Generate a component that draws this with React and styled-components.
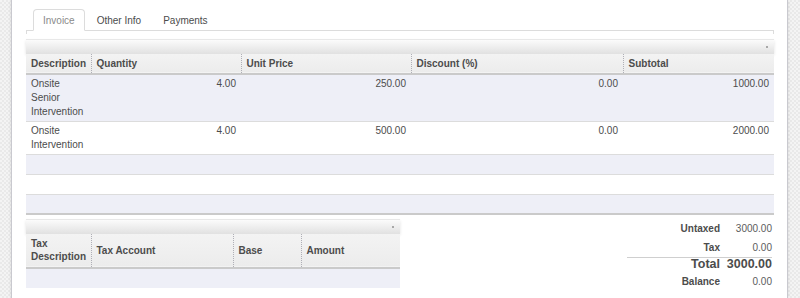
import React from 'react';
import styled, { createGlobalStyle } from 'styled-components';

const lines = [
  { id: 1, name: 'Onsite Senior Intervention', qty: '4.00', price: '250.00', discount: '0.00', subtotal: '1000.00' },
  { id: 2, name: 'Onsite Intervention', qty: '4.00', price: '500.00', discount: '0.00', subtotal: '2000.00' },
];

const tabs = ['Invoice', 'Other Info', 'Payments'];

const GlobalStyle = createGlobalStyle`
  html, body {
    margin: 0;
    padding: 0;
    height: 100%;
  }
  body {
    font-family: "Liberation Sans", Arial, sans-serif;
    font-size: 10px;
    color: #4c4c4c;
    background-color: #f4f4f4;
    background-image:
      linear-gradient(45deg, #e9e9e9 25%, transparent 25%, transparent 75%, #e9e9e9 75%),
      linear-gradient(45deg, #e9e9e9 25%, transparent 25%, transparent 75%, #e9e9e9 75%);
    background-size: 4px 4px;
    background-position: 0 0, 2px 2px;
  }
`;

const Sheet = styled.div`
  margin: 0 12px 0 11px;
  min-height: 298px;
  box-sizing: border-box;
  background: white;
  border-left: 1px solid #c9c9cf;
  border-right: 1px solid #c9c9cf;
  box-shadow: 0 0 3px rgba(0, 0, 0, 0.12);
  padding: 9px 13px 0 14px;
`;

const TabBar = styled.ul`
  display: flex;
  margin: 0;
  padding: 0 0 0 7px;
  list-style: none;
  border-bottom: 1px solid #dcdcdc;
  position: relative;
  &::before,
  &::after {
    content: '';
    position: absolute;
    bottom: -4px;
    width: 3px;
    height: 4px;
    border-left: 1px solid #dcdcdc;
  }
  &::before { left: 0; }
  &::after { right: 0; border-left: none; border-right: 1px solid #dcdcdc; }
`;

const Tab = styled.li`
  margin: 0 2px -1px 0;
  padding: 0 9px;
  height: 22px;
  line-height: 22px;
  box-sizing: border-box;
  font-size: 10px;
  color: ${(p) => (p.$active ? '#8a8a8a' : '#4c4c4c')};
  background: ${(p) => (p.$active ? 'white' : 'transparent')};
  border: 1px solid ${(p) => (p.$active ? '#dcdcdc' : 'transparent')};
  border-bottom-color: ${(p) => (p.$active ? 'white' : 'transparent')};
  border-radius: 4px 4px 0 0;
`;

const Panel = styled.div`
  padding-top: 8px;
`;

const List = styled.table`
  width: ${(p) => p.$width || '100%'};
  border-collapse: collapse;
  table-layout: fixed;
  border-bottom: ${(p) => (p.$footer ? '2px solid #cacaca' : 'none')};
`;

const Toolbar = styled.tr`
  height: 14px;
  background: linear-gradient(to bottom, #fbfbfb, #e1e1e1);
  box-shadow: 0 1px 3px rgba(0, 0, 0, 0.12);
  td {
    padding: 0 6px 0 0;
    border-top: 1px solid #e8e8e8;
    text-align: right;
    line-height: 12px;
  }
`;

const PagerDot = styled.span`
  display: inline-block;
  width: 2px;
  height: 2px;
  background: #a8a8a8;
  vertical-align: middle;
`;

const HeadRow = styled.tr`
  background: linear-gradient(to bottom, #f3f3f3, #ececec);
  border-bottom: 2px solid #cacaca;
`;

const Th = styled.th`
  padding: 3px 5px;
  height: ${(p) => p.$h || 'auto'};
  box-sizing: border-box;
  text-align: left;
  font-weight: bold;
  font-size: 10px;
  line-height: 13px;
  color: #4c4c4c;
  border-right: ${(p) => (p.$last ? 'none' : '1px dotted #afafb6')};
  vertical-align: middle;
`;

const Row = styled.tr`
  height: ${(p) => p.$h || 'auto'};
  background: ${(p) => (p.$odd ? '#eeeff7' : 'white')};
  border-top: 1px solid #dcdcdc;
`;

const Td = styled.td`
  padding: 2px 5px 2px;
  vertical-align: top;
  line-height: 14px;
  text-align: ${(p) => (p.$num ? 'right' : 'left')};
  color: #4c4c4c;
`;

const Bottom = styled.div`
  display: flex;
  justify-content: space-between;
  align-items: flex-start;
  margin-top: 4px;
`;

const Totals = styled.table`
  border-collapse: collapse;
  margin-top: 1px;
  margin-right: 2px;
`;

const TotalRow = styled.tr`
  border-top: ${(p) => (p.$line ? '1px solid #cfcfcf' : 'none')};
  th, td {
    height: ${(p) => p.$h || 17}px;
    padding-top: ${(p) => p.$pt || 0}px;
  }
`;

const TotalLabel = styled.th`
  width: 99px;
  text-align: right;
  font-weight: bold;
  font-size: ${(p) => (p.$big ? '12.5px' : '10px')};
  line-height: ${(p) => (p.$big ? '13px' : '17px')};
  color: #4c4c4c;
  padding: 0 6px 0 0;
  vertical-align: top;
  box-sizing: border-box;
`;

const TotalValue = styled.td`
  text-align: right;
  font-weight: ${(p) => (p.$big ? 'bold' : 'normal')};
  font-size: ${(p) => (p.$big ? '12.5px' : '10px')};
  line-height: ${(p) => (p.$big ? '13px' : '17px')};
  color: ${(p) => (p.$big ? '#4c4c4c' : '#5c5c5c')};
  padding: 0;
  vertical-align: top;
  min-width: 46px;
  box-sizing: border-box;
`;

const App = () => {
  return (
    <>
      <GlobalStyle />
      <Sheet>
        <TabBar>
          {tabs.map((t, i) => (
            <Tab key={t} $active={i === 0}>{t}</Tab>
          ))}
        </TabBar>

        <Panel>
          <List $footer>
            <colgroup>
              <col style={{ width: 65 }} />
              <col style={{ width: 150 }} />
              <col style={{ width: 170 }} />
              <col style={{ width: 212 }} />
              <col />
            </colgroup>
            <thead>
              <Toolbar>
                <td colSpan={5}><PagerDot /></td>
              </Toolbar>
              <HeadRow>
                <Th $h="20px">Description</Th>
                <Th>Quantity</Th>
                <Th>Unit Price</Th>
                <Th>Discount (%)</Th>
                <Th $last>Subtotal</Th>
              </HeadRow>
            </thead>
            <tbody>
              {lines.map((l, i) => (
                <Row key={l.id} $odd={i % 2 === 0}>
                  <Td>{l.name}</Td>
                  <Td $num>{l.qty}</Td>
                  <Td $num>{l.price}</Td>
                  <Td $num>{l.discount}</Td>
                  <Td $num>{l.subtotal}</Td>
                </Row>
              ))}
              {[0, 1, 2].map((i) => (
                <Row key={i} $odd={i % 2 === 0} $h="20px">
                  <td colSpan={5} />
                </Row>
              ))}
            </tbody>
          </List>

          <Bottom>
            <List $width="374px">
              <colgroup>
                <col style={{ width: 65 }} />
                <col style={{ width: 142 }} />
                <col style={{ width: 68 }} />
                <col />
              </colgroup>
              <thead>
                <Toolbar>
                  <td colSpan={4}><PagerDot /></td>
                </Toolbar>
                <HeadRow>
                  <Th $h="34px">Tax Description</Th>
                  <Th>Tax Account</Th>
                  <Th>Base</Th>
                  <Th $last>Amount</Th>
                </HeadRow>
              </thead>
              <tbody>
                <Row $odd $h="20px">
                  <td colSpan={4} />
                </Row>
              </tbody>
            </List>

            <Totals>
              <tbody>
                <TotalRow $h={19}>
                  <TotalLabel>Untaxed</TotalLabel>
                  <TotalValue>3000.00</TotalValue>
                </TotalRow>
                <TotalRow $h={18}>
                  <TotalLabel>Tax</TotalLabel>
                  <TotalValue>0.00</TotalValue>
                </TotalRow>
                <TotalRow $line $h={13}>
                  <TotalLabel $big>Total</TotalLabel>
                  <TotalValue $big>3000.00</TotalValue>
                </TotalRow>
                <TotalRow $h={19} $pt={2}>
                  <TotalLabel>Balance</TotalLabel>
                  <TotalValue>0.00</TotalValue>
                </TotalRow>
              </tbody>
            </Totals>
          </Bottom>
        </Panel>
      </Sheet>
    </>
  );
};

export default App;
